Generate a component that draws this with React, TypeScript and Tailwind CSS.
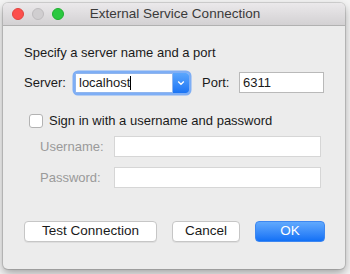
import React from "react";

export default function App() {
  const font = { fontFamily: '"Liberation Sans", Arial, sans-serif' };
  return (
    <div className="w-[350px] h-[274px] bg-[#f4f4f4] pt-[3px] pl-[3px] overflow-hidden" style={font}>
      <div className="w-[342px] h-[266px] rounded-[5px] bg-[#ececec] shadow-[0_4px_10px_rgba(0,0,0,0.35),0_0_0_1px_rgba(0,0,0,0.12)] overflow-hidden flex flex-col text-[13px] text-[#1a1a1a]">
        {/* Title bar */}
        <div className="h-[23px] shrink-0 bg-gradient-to-b from-[#ebe9eb] to-[#d3d1d3] border-b border-[#b1b1b1] flex items-center relative">
          <div className="flex items-center gap-[8px] pl-[9px]">
            <span className="w-[12px] h-[12px] rounded-full bg-[#fc4f4c] border border-[#e0443e]" />
            <span className="w-[12px] h-[12px] rounded-full bg-[#d0ced0] border border-[#bdbbbd]" />
            <span className="w-[12px] h-[12px] rounded-full bg-[#2bc840] border border-[#1fae2f]" />
          </div>
          <div className="absolute inset-0 flex items-center justify-center text-[13.5px] text-[#3a3a3a] pl-[2px]">
            External Service Connection
          </div>
        </div>

        {/* Content */}
        <div className="flex flex-col pl-[21px]">
          <div className="mt-[19px] h-[16px] leading-[16px]">Specify a server name and a port</div>

          <div className="mt-[11px] flex items-center h-[21px]">
            <span className="w-[51px]">Server:</span>
            <div className="flex h-[20px] rounded-[3px] shadow-[0_0_0_2.5px_#7eaef5]">
              <div className="w-[98px] bg-white border border-[#8fb5ee] pl-[3px] flex items-center">
                localhost<span className="w-[1px] h-[14px] bg-black" />
              </div>
              <div className="w-[16px] rounded-r-[3px] bg-gradient-to-b from-[#5aa6fd] to-[#1a74f4] flex items-center justify-center">
                <svg width="8" height="6" viewBox="0 0 8 6">
                  <path d="M1.2 1.6 L4 4.2 L6.8 1.6" stroke="white" strokeWidth="1.4" fill="none" />
                </svg>
              </div>
            </div>
            <span className="ml-[13px] w-[37px]">Port:</span>
            <div className="w-[85px] h-[21px] bg-white border border-[#b9b9b9] pl-[3px] flex items-center">6311</div>
          </div>

          <div className="mt-[20px] h-[16px] flex items-center">
            <span className="ml-[5px] w-[14px] h-[14px] rounded-[3px] bg-white border border-[#b3b3b3]" />
            <span className="ml-[6px]">Sign in with a username and password</span>
          </div>

          <div className="mt-[7px] flex items-center h-[21px] text-[#9a9a9a]">
            <span className="ml-[16px] w-[74px]">Username:</span>
            <div className="w-[207px] h-[21px] bg-white border border-[#d6d6d6]" />
          </div>

          <div className="mt-[10px] flex items-center h-[21px] text-[#9a9a9a]">
            <span className="ml-[16px] w-[74px]">Password:</span>
            <div className="w-[207px] h-[21px] bg-white border border-[#d6d6d6]" />
          </div>

          <div className="mt-[33px] flex items-center h-[21px] text-[13.5px]">
            <div className="w-[133px] h-[21px] bg-white rounded-[4px] border border-[#c6c6c6] flex items-center justify-center shadow-[0_1px_0_rgba(0,0,0,0.06)]">
              Test Connection
            </div>
            <div className="ml-[15px] w-[68px] h-[21px] bg-white rounded-[4px] border border-[#c6c6c6] flex items-center justify-center shadow-[0_1px_0_rgba(0,0,0,0.06)]">
              Cancel
            </div>
            <div className="ml-[15px] w-[70px] h-[21px] rounded-[4px] bg-gradient-to-b from-[#60a9fd] to-[#1070f5] border border-[#3d87f0] text-white flex items-center justify-center">
              OK
            </div>
          </div>
        </div>
      </div>
    </div>
  );
}
